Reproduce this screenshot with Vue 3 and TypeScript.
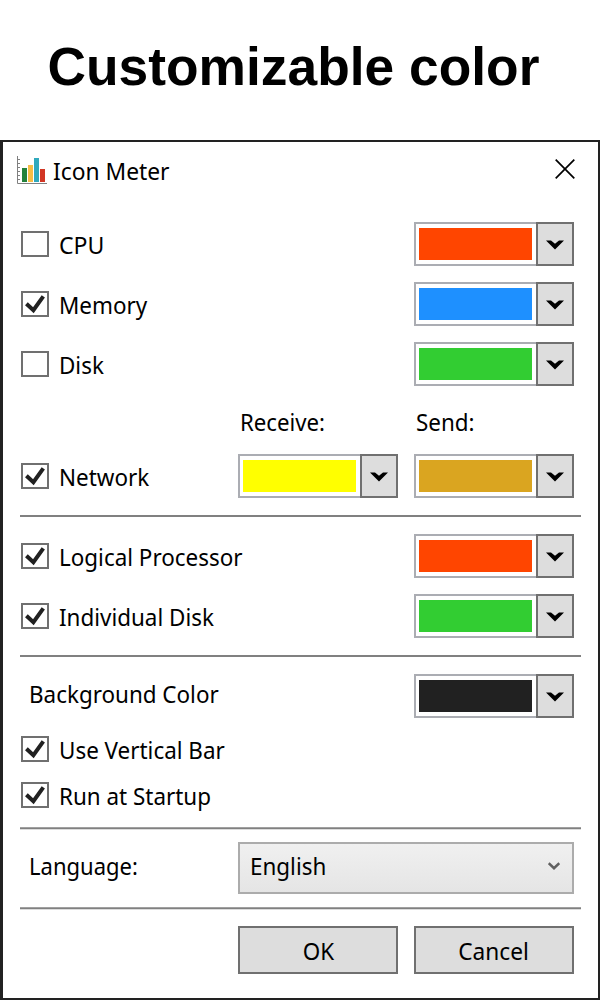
<script setup lang="ts">
import { ref } from 'vue'

interface Option {
  label: string
  kind: string
  checked: boolean
  colors: string[]
}

const meters = ref<Option[]>([
  { label: 'CPU', kind: 'cpu', checked: false, colors: ['orangered'] },
  { label: 'Memory', kind: 'memory', checked: true, colors: ['dodgerblue'] },
  { label: 'Disk', kind: 'disk', checked: false, colors: ['limegreen'] },
])
const network = ref<Option[]>([
  { label: 'Network', kind: 'net', checked: true, colors: ['yellow', 'goldenrod'] },
])
const details = ref<Option[]>([
  { label: 'Logical Processor', kind: 'logical', checked: true, colors: ['orangered'] },
  { label: 'Individual Disk', kind: 'individual', checked: true, colors: ['limegreen'] },
])
const groups = [
  { name: 'meters', options: meters },
  { name: 'network', options: network },
  { name: 'details', options: details },
]
const switches = ref([
  { label: 'Use Vertical Bar', kind: 'vertical', checked: true },
  { label: 'Run at Startup', kind: 'startup', checked: true },
])
</script>

<template>
  <main class="page">
    <h1 class="headline"><span>Customizable color</span></h1>
    <section class="window">
      <header class="titlebar">
        <svg class="logo" width="30" height="29" viewBox="0 0 30 29">
          <path d="M.5 0V27.5H30M1 3.5H3M1 7.5H3M1 11.5H3M1 15.5H3M1 19.5H3M1 23.5H3" fill="none" stroke="#808080" />
          <path d="M5 12h5v14H5z" fill="#23823b" />
          <path d="M11 9h5v17h-5z" fill="#f7bd45" />
          <path d="M17 2h5v24h-5z" fill="#30a9bd" />
          <path d="M23 13h5v13h-5z" fill="#d23624" />
        </svg>
        <span class="text title">Icon Meter</span>
        <svg class="close" width="20" height="20" viewBox="0 0 20 20">
          <path d="M.7.7 19.3 19.3M19.3.7.7 19.3" fill="none" stroke="#000" stroke-width="1.7" />
        </svg>
      </header>

      <template v-for="group in groups" :key="group.name">
        <div v-if="group.name === 'network'" class="captions">
          <span class="text receive">Receive:</span>
          <span class="text send">Send:</span>
        </div>
        <div :class="['group', group.name]">
          <div v-for="option in group.options.value" :key="option.kind" class="row">
            <label class="choice" @click="option.checked = !option.checked">
              <span class="box">
                <svg v-if="option.checked" width="24" height="22" viewBox="0 0 24 22">
                  <path d="M3.4 10.7 10.4 17.2 20.3 3.4" fill="none" stroke="#212121" stroke-width="4" />
                </svg>
              </span>
              <span :class="['text', option.kind]">{{ option.label }}</span>
            </label>
            <div v-for="color in option.colors" :key="color" class="picker">
              <div class="well"><div class="swatch" :style="{ background: color }"></div></div>
              <button class="drop">
                <svg width="18" height="10" viewBox="0 0 18 10"><path d="M0 .5H5L9 3.8 13 .5H18L9 9.5z" /></svg>
              </button>
            </div>
          </div>
        </div>
        <hr v-if="group.name !== 'meters'" />
      </template>

      <div class="row background">
        <span class="text bgcolor">Background Color</span>
        <div class="picker">
          <div class="well"><div class="swatch dark"></div></div>
          <button class="drop">
            <svg width="18" height="10" viewBox="0 0 18 10"><path d="M0 .5H5L9 3.8 13 .5H18L9 9.5z" /></svg>
          </button>
        </div>
      </div>
      <div class="switches">
        <label v-for="item in switches" :key="item.kind" class="choice" @click="item.checked = !item.checked">
          <span class="box">
            <svg v-if="item.checked" width="24" height="22" viewBox="0 0 24 22">
              <path d="M3.4 10.7 10.4 17.2 20.3 3.4" fill="none" stroke="#212121" stroke-width="4" />
            </svg>
          </span>
          <span :class="['text', item.kind]">{{ item.label }}</span>
        </label>
      </div>
      <hr class="soft" />
      <div class="language">
        <span class="lang"><span class="text language-label">Language:</span></span>
        <div class="select">
          <span class="text english">English</span>
          <svg width="12" height="9" viewBox="0 0 12 9"><path d="M.7 1.2 6 6.3 11.3 1.2" fill="none" stroke="#606060" stroke-width="2.6" /></svg>
        </div>
      </div>
      <hr class="soft" />
      <footer class="actions">
        <button class="action"><span class="text ok">OK</span></button>
        <button class="action"><span class="text cancel">Cancel</span></button>
      </footer>
    </section>
  </main>
</template>

<style>
body { margin: 0; background: #fff; }
</style>

<style scoped>
.page { width: 600px; height: 1000px; overflow: hidden; background: #fff; color: #000; font-family: "Noto Sans", "Open Sans", sans-serif; }
.page * { box-sizing: border-box; }
.headline { height: 140px; margin: 0; padding: 35px 0 0 47.5px; font: bold 53.33px/64px "Liberation Sans", Arial, sans-serif; white-space: nowrap; }
.window { width: 600px; height: 860px; border: solid #222; border-width: 2px 2px 2px 3px; padding: 0 0 0 17px; }
.text { font-size: 23.5px; font-weight: 400; line-height: 32px; white-space: nowrap; display: inline-block; transform: scaleX(.954); transform-origin: left center; }
.titlebar { display: flex; align-items: center; height: 72px; margin-left: -3px; padding-bottom: 16px; }
.title { margin: 1px 0 0 6px; transform: scaleX(.97); }
.close { margin: -2px 23px 0 auto; }
.row { display: flex; align-items: center; height: 60px; width: 554px; gap: 16px; }
.choice { display: flex; align-items: center; height: 46px; gap: 10px; margin-right: auto; padding-left: 1px; }
.choice .text { margin-top: 1px; }
.choice .cpu { transform: scaleX(.98); }
.bgcolor { margin-top: -5px; }
.captions .receive { transform: scaleX(.945); }
.language-label { transform: scaleX(.937); }
.ok, .cancel { transform-origin: center; }
.cancel { transform: scaleX(.965); }
.box { width: 28px; height: 26px; border: 2px solid #707070; background: #fff; flex: none; }
.box svg { display: block; }
.picker { display: flex; width: 160px; height: 44px; }
.well { width: 122px; height: 44px; border: 2px solid #abadb3; border-right: 0; padding: 4px 4px 4px 3.3px; }
.swatch { height: 32px; width: 112.7px; }
.dark { background: #212121; }
.drop { width: 38px; height: 44px; padding: 1px 0 0; border: 2px solid #707070; background: #ddd; display: grid; place-items: center; }
.drop svg { display: block; }
.captions { display: flex; height: 52px; padding: 12px 0 0 220px; }
.captions .text { width: 176px; }
.network { height: 69px; }
hr { width: 561px; height: 2px; margin: 0; border: 0; background: #808080; }
.details { padding-top: 9px; height: 138px; }
.background { padding-left: 9px; height: 78px; }
.background .picker { margin-left: auto; }
.switches { margin-top: -9px; height: 101px; }
.soft { height: 3px; background: linear-gradient(#a0a0a0 0 1px, #808080 1px 2px, #dcdcdc 2px); }
.language { display: flex; height: 77px; padding: 12px 0 0 9px; }
.lang { width: 209px; margin-top: 8px; }
.select { width: 336px; height: 52px; border: 2px solid #acacac; background: linear-gradient(#f0f0f0, #e5e5e5); display: flex; justify-content: space-between; align-items: center; padding: 0 12px 3px 9.5px; }
.english { margin-top: -2px; }
.actions { display: flex; gap: 16px; padding: 16px 0 0 218px; }
.action { width: 160px; height: 48px; padding: 2px 0 0; border: 2px solid #707070; background: #ddd; color: #000; font-family: inherit; }
</style>
